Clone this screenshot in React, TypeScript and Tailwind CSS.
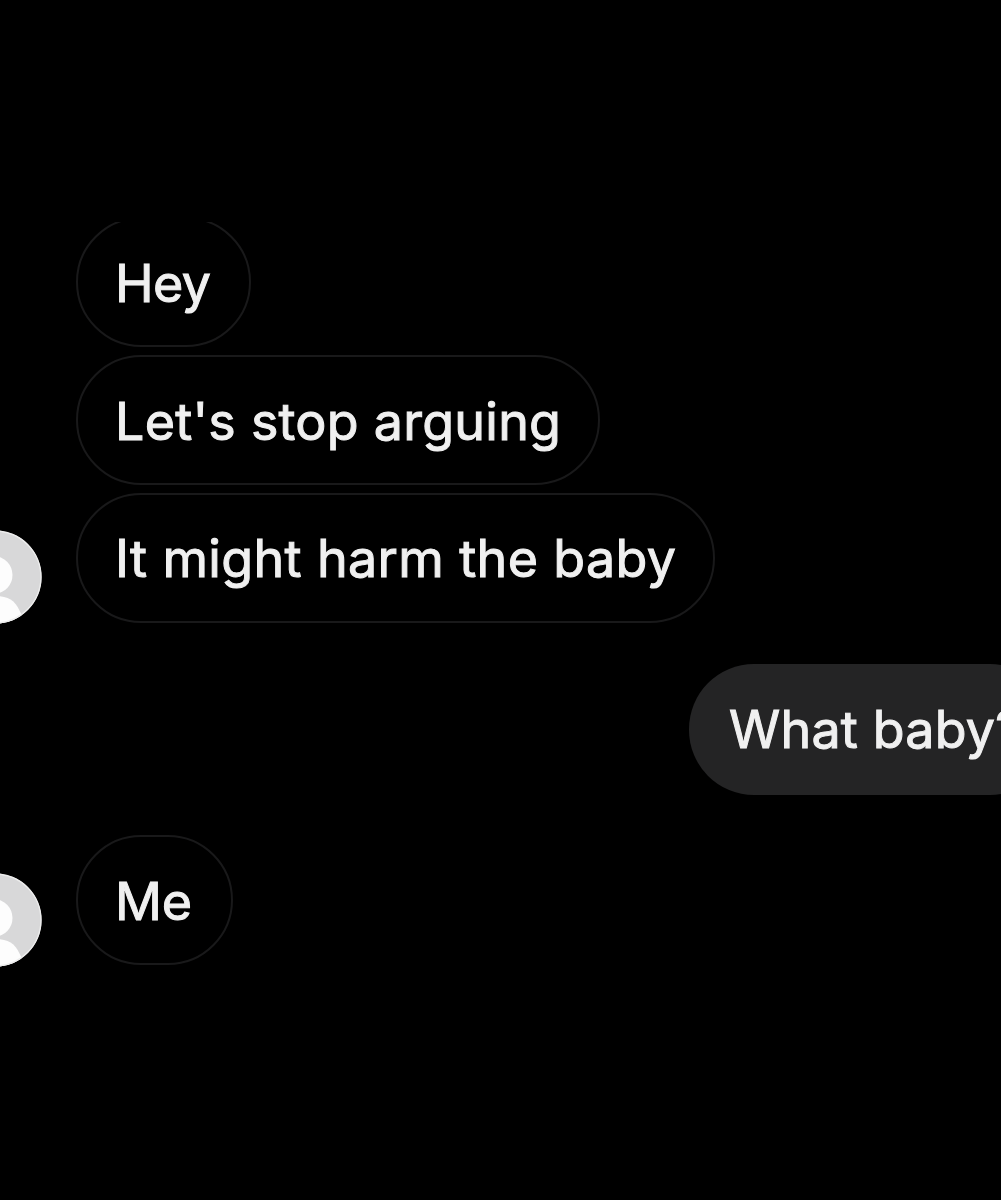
import { ReactNode } from "react";

function Avatar() {
  return (
    <svg viewBox="0 0 94 94" className="h-[94px] w-[94px] shrink-0" aria-hidden="true">
      <defs>
        <clipPath id="avatar-clip">
          <circle cx="47" cy="47" r="46.7" />
        </clipPath>
      </defs>
      <g clipPath="url(#avatar-clip)">
        <rect width="94" height="94" fill="#d8d8d9" />
        <ellipse cx="47" cy="45" rx="17.5" ry="18.5" fill="#fdfdfd" />
        <path d="M16 94C20 76 32 66 47 66S68 71 74 86L72 94Z" fill="#fdfdfd" />
        <circle cx="47" cy="47" r="46" fill="none" stroke="#ececec" strokeWidth="1.5" />
      </g>
    </svg>
  );
}

function Received({ className, children }: { className: string; children: ReactNode }) {
  return (
    <div
      className={`flex h-[130px] shrink-0 items-center rounded-[65px] border-2 border-[#19191a] pl-[37px] ${className}`}
    >
      {children}
    </div>
  );
}

export default function App() {
  return (
    <main className="flex h-[1200px] w-[1001px] flex-col overflow-hidden bg-black pt-[222px] font-['Inter',sans-serif] text-[52px] leading-none whitespace-nowrap text-[#f0f0f0] [-webkit-text-stroke:1px_#f0f0f0]">
      <section className="flex h-[402px] shrink-0 flex-col overflow-hidden">
        <div className="-mt-[5px] flex shrink-0 flex-col gap-2 pl-[76px]">
          <Received className="w-[175px] pt-1">
            <span className="tracking-[-0.6px]">Hey</span>
          </Received>
          <Received className="w-[524px] pt-1">
            <span className="tracking-[0.25px]">Let's stop arguing</span>
          </Received>
          <div className="-ml-[128px] flex items-start gap-[34px]">
            <div className="mt-[37px]">
              <Avatar />
            </div>
            <Received className="w-[639px] pt-0.5">
              <span className="tracking-[0.35px]">It might harm the baby</span>
            </Received>
          </div>
        </div>
      </section>

      <div className="mt-10 ml-[689px] flex h-[131px] w-[366px] shrink-0 items-center rounded-[65px] bg-[#242425] pt-px pl-10">
        <span className="tracking-[0.2px]">What baby?</span>
      </div>

      <div className="mt-10 -ml-[52px] flex items-start gap-[34px]">
        <div className="mt-[38px]">
          <Avatar />
        </div>
        <Received className="w-[157px] pt-[3px]">
          <span className="tracking-[-0.1px]">Me</span>
        </Received>
      </div>
    </main>
  );
}
